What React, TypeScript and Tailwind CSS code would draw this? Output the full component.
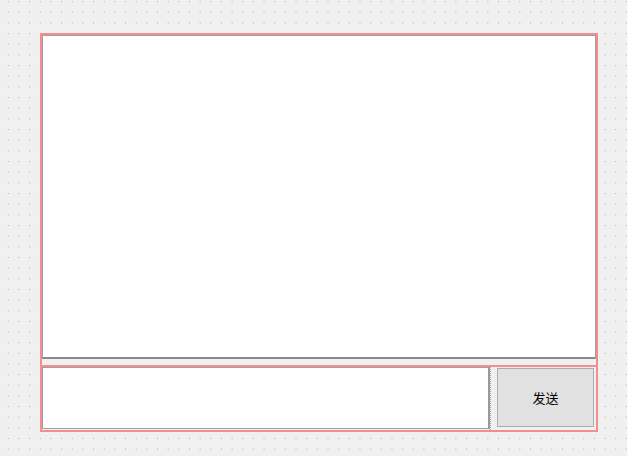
export default function App() {
  return (
    <div
      className="w-[627px] h-[456px] bg-[#f0f0f0] bg-[radial-gradient(circle,#a8a8a8_0.6px,transparent_0.9px)] bg-[length:10.67px_10.67px] bg-[position:3px_7px] pl-[40px] pt-[33px]"
      style={{ fontFamily: '"Noto Sans CJK SC", "Noto Sans", sans-serif' }}
    >
      <div className="w-[558px] h-[399px] border-2 border-[rgba(245,100,100,0.7)] flex flex-col bg-[#f0f0f0]">
        {/* text browser */}
        <div className="h-[324px] bg-white border border-[#a0a0a0] border-b-2 border-b-[#8a8a8a]" />
        <div className="h-[6px]" />
        <div className="flex h-[65px] border-t-2 border-[rgba(245,100,100,0.7)]">
          <div className="w-[448px] h-[62px] bg-white border border-[#a0a0a0] border-r-2 border-r-[#9a9a9a]" />
          <div className="w-[7px] flex">
            <div className="w-px h-full border-l border-dotted border-[#a8a8a8]" />
          </div>
          <div className="flex-1 pr-[2px] pt-[1px] pb-[3px]">
            <button className="w-full h-[59px] bg-[#e1e1e1] border border-[#adadad] text-[13px] text-black">
              发送
            </button>
          </div>
        </div>
      </div>
    </div>
  );
}
